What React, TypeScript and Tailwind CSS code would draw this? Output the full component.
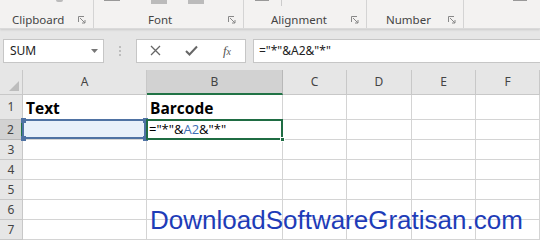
import React from 'react';

const cols = ['A', 'B', 'C', 'D', 'E', 'F'];
const rows = [1, 2, 3, 4, 5, 6, 7];

const groups = [
  { label: 'Clipboard', w: 'w-[94px]', pl: 'pl-[12px]' },
  { label: 'Font', w: 'w-[150px]', pl: 'pl-[54px]' },
  { label: 'Alignment', w: 'w-[123px]', pl: 'pl-[27px]' },
  { label: 'Number', w: 'w-[97px]', pl: 'pl-[19px]' },
];

function Launcher() {
  return (
    <svg width="9" height="9" viewBox="0 0 9 9" className="text-[#888]">
      <path d="M0.5 0.5H6M0.5 0.5V6M2 2L7 7M7 4V7H4" fill="none" stroke="currentColor" strokeWidth="1" />
    </svg>
  );
}

function Ribbon() {
  return (
    <div className="h-[29px] bg-[#f3f2f1] flex border-b border-[#dadada] shadow-[0_1px_2px_rgba(0,0,0,0.12)] relative z-10">
      {groups.map((g) => (
        <div key={g.label} className={`${g.w} h-full border-r border-[#d4d4d4] flex items-end justify-between pb-[3px] pr-[6px] ${g.pl}`}>
          <span className="text-[11.5px] text-[#444] leading-none" style={{ fontFamily: '"Noto Sans", sans-serif' }}>{g.label}</span>
          <Launcher />
        </div>
      ))}
      <div className="flex-1" />
      {/* faint cut-off icons at the top */}
      <div className="absolute left-[56px] top-0 w-[7px] h-[2px] bg-[#bbb] rounded-b" />
      <div className="absolute left-[104px] top-0 w-[16px] h-[1px] bg-[#999]" />
      <div className="absolute left-[151px] top-0 w-[16px] h-[4px] bg-[#bbb]" />
      <div className="absolute left-[188px] top-0 w-[16px] h-[4px] bg-[#bbb]" />
      <div className="absolute left-[255px] top-0 w-[14px] h-[1px] bg-[#999]" />
      <div className="absolute left-[281px] top-0 w-[1px] h-[6px] bg-[#ccc]" />
      <div className="absolute left-[513px] top-0 w-[14px] h-[1px] bg-[#999]" />
    </div>
  );
}

function FormulaBar() {
  return (
    <div className="h-[41px] bg-[#e6e6e6] flex items-center pl-[3px] pt-[2px]">
      <div className="w-[101px] h-[24px] bg-white border border-[#c6c6c6] flex items-center justify-between pl-[6px] pr-[5px]">
        <span className="text-[12px] text-[#222]" style={{ fontFamily: '"Noto Sans", sans-serif' }}>SUM</span>
        <svg width="7" height="4" viewBox="0 0 7 4"><path d="M0 0H7L3.5 4Z" fill="#777" /></svg>
      </div>
      <div className="w-[32px] flex flex-col items-center gap-[2px]">
        <div className="w-[2px] h-[2px] bg-[#bdbdbd]" />
        <div className="w-[2px] h-[2px] bg-[#bdbdbd]" />
        <div className="w-[2px] h-[2px] bg-[#bdbdbd]" />
      </div>
      <div className="w-[110px] h-[24px] bg-white border border-[#c6c6c6] flex items-center">
        <div className="w-[36px] flex justify-center">
          <svg width="11" height="11" viewBox="0 0 11 11"><path d="M1 1L10 10M10 1L1 10" stroke="#666" strokeWidth="1.3" /></svg>
        </div>
        <div className="w-[36px] flex justify-center">
          <svg width="13" height="11" viewBox="0 0 13 11"><path d="M1 6L4.5 9.5L12 1.5" fill="none" stroke="#666" strokeWidth="2" /></svg>
        </div>
        <div className="w-[36px] flex justify-center">
          <span className="text-[13px] italic text-[#555] leading-none" style={{ fontFamily: '"Liberation Serif", serif' }}>f<span className="text-[10px]">x</span></span>
        </div>
      </div>
      <div className="ml-[7px] flex-1 h-[24px] bg-white border-y border-l border-[#c6c6c6] flex items-center pl-[5px]">
        <span className="text-[12px] text-[#222]" style={{ fontFamily: '"Noto Sans", sans-serif' }}>="*"&amp;A2&amp;"*"</span>
      </div>
    </div>
  );
}

function Handle({ pos }: { pos: string }) {
  return <div className={`absolute w-[5px] h-[5px] bg-[#4f72a3] ${pos}`} />;
}

function Grid() {
  const cellFont = { fontFamily: '"Open Sans", sans-serif' };
  const hdrFont = { fontFamily: '"Noto Sans", sans-serif' };
  return (
    <div className="grid grid-cols-[23px_124px_136px_64px_65px_64px_64px] grid-rows-[25px_25px_20px_20px_20px_20px_20px_20px] bg-white">
      {/* corner */}
      <div className="bg-[#e6e6e6] border-r border-b border-[#c8c8c8] relative">
        <svg className="absolute right-[3px] bottom-[3px]" width="10" height="10" viewBox="0 0 10 10"><path d="M10 0V10H0Z" fill="#bdbdbd" /></svg>
      </div>
      {cols.map((c) => (
        <div
          key={c}
          className={`flex items-center justify-center text-[12px] text-[#444] border-r ${
            c === 'B' ? 'bg-[#d2d2d2] border-b-2 border-b-[#217346] border-r-[#b8b8b8]' : 'bg-[#e6e6e6] border-b border-[#c8c8c8]'
          }`}
          style={hdrFont}
        >
          {c}
        </div>
      ))}
      {rows.map((r) => (
        <React.Fragment key={r}>
          <div
            className={`flex items-center justify-center text-[12px] text-[#444] border-b ${
              r === 2 ? 'bg-[#d2d2d2] border-r-2 border-r-[#217346] border-b-[#b8b8b8]' : 'bg-[#e6e6e6] border-r border-[#c8c8c8]'
            }`}
            style={hdrFont}
          >
            {r}
          </div>
          {cols.map((c) => {
            const key = `${c}${r}`;
            if (key === 'A1' || key === 'B1') {
              return (
                <div key={key} className="border-r border-b border-[#d4d4d4] flex items-end pl-[3px] pb-[1px]">
                  <span className="text-[15.5px] font-bold text-black leading-none pb-[2px]" style={cellFont}>{key === 'A1' ? 'Text' : 'Barcode'}</span>
                </div>
              );
            }
            if (key === 'A2') {
              return (
                <div key={key} className="relative bg-[#e8f0fa] border-r border-b border-[#d4d4d4]">
                  <div className="absolute -left-[1px] -top-[1px] right-0 bottom-0 border-2 border-[#4f72a3]" />
                  <Handle pos="-left-[2px] -top-[2px]" />
                  <Handle pos="-right-[2px] -top-[2px]" />
                  <Handle pos="-left-[2px] -bottom-[2px]" />
                  <Handle pos="-right-[2px] -bottom-[2px]" />
                </div>
              );
            }
            if (key === 'B2') {
              return (
                <div key={key} className="relative border-r border-b border-[#d4d4d4] flex items-center pl-[2px]">
                  <div className="absolute -left-[1px] -top-[1px] -right-[1px] -bottom-[1px] border-2 border-[#1f6c43]" />
                  <div className="absolute -right-[3px] -bottom-[3px] w-[5px] h-[5px] bg-[#1f6c43] border border-white" />
                  <span className="text-[13px] text-black leading-none" style={cellFont}>
                    ="*"&amp;<span className="text-[#3c6db3]">A2</span>&amp;"*"
                  </span>
                </div>
              );
            }
            return <div key={key} className="border-r border-b border-[#d4d4d4]" />;
          })}
        </React.Fragment>
      ))}
    </div>
  );
}

export default function App() {
  return (
    <div className="w-[540px] h-[242px] overflow-hidden relative bg-white">
      <Ribbon />
      <FormulaBar />
      <Grid />
      <div
        className="absolute left-[150px] top-[207px] text-[26px] text-[#1e3cb8] leading-none whitespace-nowrap"
        style={{ fontFamily: '"Liberation Sans", Arial, sans-serif' }}
      >
        DownloadSoftwareGratisan.com
      </div>
    </div>
  );
}
